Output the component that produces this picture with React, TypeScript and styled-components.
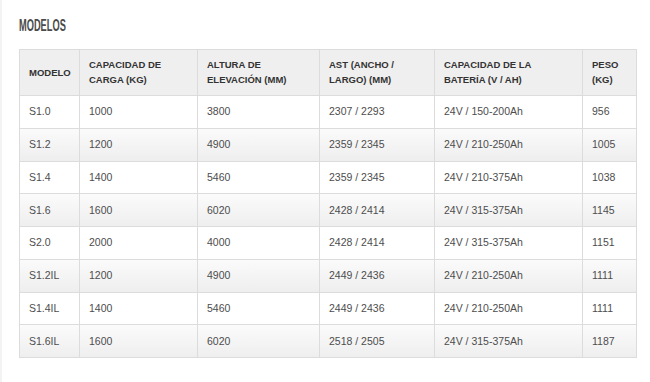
import React from 'react';
import styled, { createGlobalStyle } from 'styled-components';

const GlobalStyle = createGlobalStyle`
  html, body {
    margin: 0;
    padding: 0;
    background: #fff;
  }
  body {
    font-family: "Liberation Sans", Arial, sans-serif;
  }
`;

type Row = {
  model: string;
  load: string;
  height: string;
  ast: string;
  battery: string;
  weight: string;
};

const rows: Row[] = [
  { model: 'S1.0', load: '1000', height: '3800', ast: '2307 / 2293', battery: '24V / 150-200Ah', weight: '956' },
  { model: 'S1.2', load: '1200', height: '4900', ast: '2359 / 2345', battery: '24V / 210-250Ah', weight: '1005' },
  { model: 'S1.4', load: '1400', height: '5460', ast: '2359 / 2345', battery: '24V / 210-375Ah', weight: '1038' },
  { model: 'S1.6', load: '1600', height: '6020', ast: '2428 / 2414', battery: '24V / 315-375Ah', weight: '1145' },
  { model: 'S2.0', load: '2000', height: '4000', ast: '2428 / 2414', battery: '24V / 315-375Ah', weight: '1151' },
  { model: 'S1.2IL', load: '1200', height: '4900', ast: '2449 / 2436', battery: '24V / 210-250Ah', weight: '1111' },
  { model: 'S1.4IL', load: '1400', height: '5460', ast: '2449 / 2436', battery: '24V / 210-250Ah', weight: '1111' },
  { model: 'S1.6IL', load: '1600', height: '6020', ast: '2518 / 2505', battery: '24V / 315-375Ah', weight: '1187' },
];

const columns = [
  { label: 'MODELO', width: 60 },
  { label: 'CAPACIDAD DE CARGA (KG)', width: 118 },
  { label: 'ALTURA DE ELEVACIÓN (MM)', width: 122 },
  { label: 'AST (ANCHO / LARGO) (MM)', width: 115 },
  { label: 'CAPACIDAD DE LA BATERÍA (V / AH)', width: 148 },
  { label: 'PESO (KG)', width: 54 },
];

const App: React.FC = () => {
  return (
    <Page>
      <GlobalStyle />
      <Title>Modelos</Title>
      <SpecTable>
        <colgroup>
          {columns.map((c) => (
            <col key={c.label} style={{ width: c.width }} />
          ))}
        </colgroup>
        <thead>
          <tr>
            {columns.map((c) => (
              <HeadCell key={c.label}>{c.label}</HeadCell>
            ))}
          </tr>
        </thead>
        <tbody>
          {rows.map((r, i) => (
            <BodyRow key={r.model} $striped={i % 2 === 1}>
              <Cell>{r.model}</Cell>
              <Cell>{r.load}</Cell>
              <Cell>{r.height}</Cell>
              <Cell>{r.ast}</Cell>
              <Cell>{r.battery}</Cell>
              <Cell>{r.weight}</Cell>
            </BodyRow>
          ))}
        </tbody>
      </SpecTable>
    </Page>
  );
};

const Page = styled.div`
  min-height: 382px;
  box-sizing: border-box;
  border-left: 2px solid #f3f3f3;
  padding: 18px 0 0 17px;
`;

// condensed display heading: no narrow face installed, so squeeze a bold sans
const Title = styled.h2`
  display: block;
  width: fit-content;
  margin: 0 0 15px;
  font-family: "Liberation Sans", Arial, sans-serif;
  font-weight: 700;
  font-size: 17px;
  line-height: 16px;
  text-transform: uppercase;
  color: #4a4a4a;
  transform: scaleX(0.545);
  transform-origin: left center;
`;

const SpecTable = styled.table`
  border-collapse: collapse;
  table-layout: fixed;
  width: 617px;
  font-size: 10.5px;
  color: #4d4d4d;
`;

const HeadCell = styled.th`
  text-align: left;
  vertical-align: middle;
  background: #efefef;
  border: 1px solid #dcdcdc;
  padding: 7px 9px 8px 9px;
  height: 30px;
  font-size: 9.5px;
  font-weight: 700;
  line-height: 15px;
  color: #333;
`;

const BodyRow = styled.tr<{ $striped: boolean }>`
  background: ${(p) =>
    p.$striped ? 'linear-gradient(to bottom, #fbfbfb, #eeeeee)' : '#fff'};
`;

const Cell = styled.td`
  border: 1px solid #dcdcdc;
  padding: 0 9px;
  height: 31.75px;
  line-height: 13px;
  vertical-align: middle;
  color: #4d4d4d;
`;

export default App;
